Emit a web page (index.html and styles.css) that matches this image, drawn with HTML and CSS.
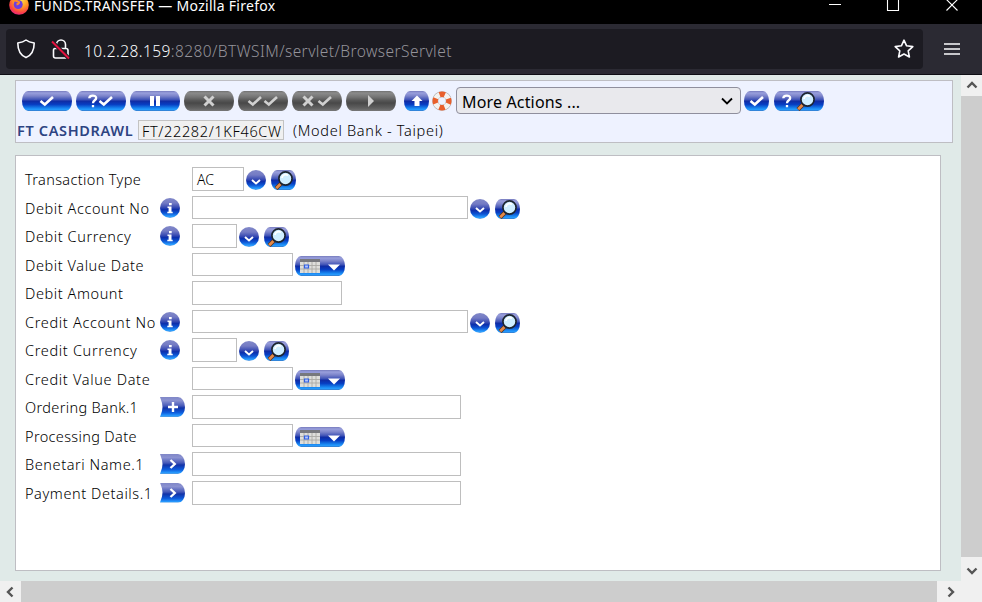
FILE: index.html
```html
<!DOCTYPE html>
<html lang="en">
<head>
<meta charset="utf-8">
<title>FUNDS.TRANSFER</title>
<link rel="stylesheet" href="styles.css">
</head>
<body>
<svg class="defs" aria-hidden="true">
  <defs>
    <radialGradient id="fox" cx=".6" cy=".25" r=".8"><stop offset="0" stop-color="#ffe04a"/><stop offset=".45" stop-color="#ff9a22"/><stop offset=".8" stop-color="#fa4048"/><stop offset="1" stop-color="#e5208a"/></radialGradient>
    <symbol id="check" viewBox="0 0 16 12"><path d="M1.5 6 5.8 9.5 14 2" fill="none" stroke="currentColor" stroke-width="2.6"/></symbol>
    <symbol id="cross" viewBox="0 0 12 12"><path d="M1.5 1.5 10.5 10.5M10.5 1.5 1.5 10.5" fill="none" stroke="currentColor" stroke-width="3"/></symbol>
    <symbol id="question" viewBox="0 0 10 14"><path d="M1.3 4.2C1.3.8 8.2.6 8.2 4 8.2 6.4 5 6.2 5 9.3M5 11v2.2" fill="none" stroke="currentColor" stroke-width="2.3"/></symbol>
    <symbol id="pause" viewBox="0 0 12 12"><path d="M1 1h4v10H1zM7 1h4v10H7z" fill="currentColor"/></symbol>
    <symbol id="play" viewBox="0 0 8 12"><path d="M1 0 7 6 1 12z" fill="currentColor"/></symbol>
    <symbol id="up" viewBox="0 0 12 12"><path d="M6 .5 11.5 6H8.5v5h-5V6H.5z" fill="currentColor"/></symbol>
    <symbol id="down" viewBox="0 0 12 8"><path d="M2 2 6 5.5 10 2" fill="none" stroke="currentColor" stroke-width="2"/></symbol>
    <symbol id="plus" viewBox="0 0 12 12"><path d="M6 1v10M1 6h10" fill="none" stroke="currentColor" stroke-width="2.4"/></symbol>
    <symbol id="next" viewBox="0 0 8 12"><path d="M1.5 2 5.8 6 1.5 10" fill="none" stroke="currentColor" stroke-width="2.3"/></symbol>
    <symbol id="info" viewBox="0 0 8 12"><path d="M3 1h2.7v2.3H3zM1.5 4.6h4v5.2h1.2v1.4h-5.4V9.8h1.3V6H1.5z" fill="currentColor"/></symbol>
    <symbol id="lens" viewBox="0 0 20 20"><path d="M2 18.5 7 13.5" stroke="#56301c" stroke-width="4.2"/><path d="M2.2 18.3 6.5 14" stroke="#e38a4a" stroke-width="2.7"/><circle cx="11.5" cy="8.5" r="6.6" fill="#cfeeff" stroke="#1c2530" stroke-width="1.7"/><path d="M8 8C8.3 5 11 3.8 14 5.3" fill="none" stroke="#fff" stroke-width="1.8"/></symbol>
    <symbol id="calendar" viewBox="0 0 20 14"><path d="M0 0h20v14H0z" fill="#dededb"/><path d="M0 0h20v3H0z" fill="#77787d"/><path d="M0 6.5h20M0 10h20M4 3v11M8 3v11M12 3v11M16 3v11" stroke="#aaa9a5" stroke-width=".9"/><path d="M4.5 6h4v3h-4z" fill="#b7c9ff" stroke="#315fe0" stroke-width="1.2"/></symbol>
    <symbol id="triangle" viewBox="0 0 12 7"><path d="M0 .5h12L6 6.5z" fill="currentColor"/></symbol>
    <symbol id="scroll" viewBox="0 0 12 8"><path d="M1.500 6.500 6 2 10.500 6.500" fill="none" stroke="#555" stroke-width="2.4"/></symbol>
  </defs>
</svg>

<header class="titlebar">
  <svg class="firefox" viewBox="0 0 20 20"><circle cx="10" cy="10" r="9.8" fill="url(#fox)"/><circle cx="9.2" cy="9.5" r="4.5" fill="#6c3ee0"/><path d="M3 5C6 5 7 6 9 6.5 11 7 10 9 7.5 9.5" fill="none" stroke="#ff8a28" stroke-width="2"/></svg>
  <span class="title">FUNDS.TRANSFER — Mozilla Firefox</span>
  <svg class="window-controls" viewBox="0 0 130 24"><path d="M1 4.5h12M59.500-.5h11v11h-11zM118.500-.5l11 11M129.500-.5l-11 11" fill="none" stroke="#fff" stroke-width="1.1"/></svg>
</header>
<nav class="toolbar">
  <div class="urlbar">
    <svg class="shield" viewBox="0 0 20 20"><path d="M10 1C7.500 3 5 3.500 1.800 4c0 7 2 12 8.200 14.600C16.200 16 18.200 11 18.200 4 15 3.500 12.500 3 10 1z" fill="none" stroke="#fbfbfe" stroke-width="1.6" stroke-linejoin="round"/></svg>
    <svg class="lock" viewBox="0 0 20 22"><path d="M5.500 9V6.500a4.500 4.500 0 0 1 9 0V11M4 10.500h11c1.500 0 2 .5 2 2V18c0 1.500-.5 2-2 2H4.500c-1.500 0-2-.5-2-2v-5.500c0-1 .5-2 1.500-2z" fill="none" stroke="#fbfbfe" stroke-width="1.6"/><path d="M1 3.500 18 20.500" stroke="#1c1b22" stroke-width="4"/><path d="M1 3.500 18 20.500" stroke="#e5123f" stroke-width="1.9"/></svg>
    <span class="url"><b>10.2.28.159</b>:8280/BTWSIM/servlet/BrowserServlet</span>
    <svg class="star" viewBox="0 0 20 20"><path d="M10 1.200 12.600 6.800 18.800 7.600 14.200 11.800 15.400 18 10 15 4.600 18 5.800 11.800 1.200 7.600 7.400 6.800z" fill="none" stroke="#fbfbfe" stroke-width="1.6" stroke-linejoin="round"/></svg>
  </div>
  <svg class="menu" viewBox="0 0 16 14"><path d="M0 2h16M0 7h16M0 12h16" stroke="#fbfbfe" stroke-width="1.5"/></svg>
</nav>

<div class="viewport">
  <main class="page">
    <section class="panel actions">
      <div class="action-row">
        <span class="pill"><svg class="i16"><use href="#check"/></svg></span>
        <span class="pill"><svg class="iq"><use href="#question"/></svg><svg class="i16"><use href="#check"/></svg></span>
        <span class="pill"><svg class="i12"><use href="#pause"/></svg></span>
        <span class="pill off"><svg class="i12"><use href="#cross"/></svg></span>
        <span class="pill off"><svg class="i16"><use href="#check"/></svg><svg class="i16"><use href="#check"/></svg></span>
        <span class="pill off spaced"><svg class="i12"><use href="#cross"/></svg><svg class="i16"><use href="#check"/></svg></span>
        <span class="pill off"><svg class="i8"><use href="#play"/></svg></span>
        <span class="pill small first"><svg class="i12"><use href="#up"/></svg></span>
        <svg class="buoy" viewBox="0 0 20 20"><circle cx="10" cy="10" r="6.800" fill="none" stroke="#aaa9a9" stroke-width="6"/><circle cx="10" cy="10" r="6.800" fill="none" stroke="#f4f2ef" stroke-width="5"/><circle cx="10" cy="10" r="6.800" fill="none" stroke="#e85f2c" stroke-width="5.400" stroke-dasharray="5.340 5.340" stroke-dashoffset="2.670"/></svg>
        <div class="select"><span>More Actions ...</span><svg viewBox="0 0 12 8"><path d="M1 1.500 6 6.500 11 1.500" fill="none" stroke="#000" stroke-width="1.8"/></svg></div>
        <span class="pill small"><svg class="i16"><use href="#check"/></svg></span>
        <span class="pill search"><svg class="iq"><use href="#question"/></svg><svg class="i20"><use href="#lens"/></svg></span>
      </div>
      <div class="record"><strong>FT CASHDRAWL</strong><span class="record-id">FT/22282/1KF46CW</span><span class="company">(Model Bank - Taipei)</span></div>
    </section>

    <section class="panel form">
      <div class="row"><label class="even">Transaction Type</label><span class="lead"></span><span class="field w52">AC</span><span class="drop"><svg><use href="#down"/></svg></span><span class="pill small find"><svg class="i20"><use href="#lens"/></svg></span></div>
      <div class="row"><label>Debit Account No</label><span class="lead"><span class="info"><svg><use href="#info"/></svg></span></span><span class="field w276"></span><span class="drop"><svg><use href="#down"/></svg></span><span class="pill small find"><svg class="i20"><use href="#lens"/></svg></span></div>
      <div class="row"><label>Debit Currency</label><span class="lead"><span class="info"><svg><use href="#info"/></svg></span></span><span class="field w45"></span><span class="drop"><svg><use href="#down"/></svg></span><span class="pill small find"><svg class="i20"><use href="#lens"/></svg></span></div>
      <div class="row"><label>Debit Value Date</label><span class="lead"></span><span class="field w101"></span><span class="pill date"><svg class="cal"><use href="#calendar"/></svg><svg class="tri"><use href="#triangle"/></svg></span></div>
      <div class="row"><label>Debit Amount</label><span class="lead"></span><span class="field w150"></span></div>
      <div class="row"><label class="wide">Credit Account No</label><span class="lead"><span class="info"><svg><use href="#info"/></svg></span></span><span class="field w276"></span><span class="drop"><svg><use href="#down"/></svg></span><span class="pill small find"><svg class="i20"><use href="#lens"/></svg></span></div>
      <div class="row"><label class="wide">Credit Currency</label><span class="lead"><span class="info"><svg><use href="#info"/></svg></span></span><span class="field w45"></span><span class="drop"><svg><use href="#down"/></svg></span><span class="pill small find"><svg class="i20"><use href="#lens"/></svg></span></div>
      <div class="row"><label class="wide">Credit Value Date</label><span class="lead"></span><span class="field w101"></span><span class="pill date"><svg class="cal"><use href="#calendar"/></svg><svg class="tri"><use href="#triangle"/></svg></span></div>
      <div class="row"><label class="even">Ordering Bank.1</label><span class="lead"><span class="tab"><svg class="i12"><use href="#plus"/></svg></span></span><span class="field w269"></span></div>
      <div class="row"><label class="even">Processing Date</label><span class="lead"></span><span class="field w101"></span><span class="pill date"><svg class="cal"><use href="#calendar"/></svg><svg class="tri"><use href="#triangle"/></svg></span></div>
      <div class="row"><label>Benetari Name.1</label><span class="lead"><span class="tab"><svg class="i8"><use href="#next"/></svg></span></span><span class="field w269"></span></div>
      <div class="row"><label>Payment Details.1</label><span class="lead"><span class="tab"><svg class="i8"><use href="#next"/></svg></span></span><span class="field w269"></span></div>
    </section>
  </main>
  <div class="vscroll"><svg><use href="#scroll"/></svg><div class="thumb"></div><svg class="turn-down"><use href="#scroll"/></svg></div>
  <div class="hscroll"><svg class="turn-left"><use href="#scroll"/></svg><div class="thumb"></div><svg class="turn-right"><use href="#scroll"/></svg></div>
  <div class="corner"></div>
</div>
</body>
</html>
```
FILE: styles.css
```css
* { box-sizing: border-box; }
body { margin: 0; width: 982px; height: 602px; overflow: hidden; display: flex; flex-direction: column; font: 300 14.5px/20px "Noto Sans", sans-serif; color: #000; }
svg { display: block; flex: none; }
.defs { position: absolute; width: 0; height: 0; }
.titlebar { height: 24px; background: #000; color: #fff; display: flex; }
.firefox { width: 20px; height: 20px; margin: -5px 5px 0 9px; }
.title { font-size: 14px; line-height: 20px; margin-top: -4px; white-space: nowrap; letter-spacing: .29px; font-weight: 400; }
.window-controls { width: 130px; height: 24px; margin: 0 24px 0 auto; }
.toolbar { height: 51px; padding: 5px 0 6px 6px; background: #2b2a33; border-bottom: 1px solid #0f0e15; display: flex; align-items: flex-start; }
.urlbar { width: 917px; height: 40px; border-radius: 4px; background: #1c1b22; color: #94939a; display: flex; align-items: center; padding: 0 9px 0 10px; }
.shield { width: 20px; height: 20px; }
.lock { width: 20px; height: 22px; margin-left: 15px; }
.url { font-size: 15.5px; margin: 4px 0 0 13px; white-space: nowrap; letter-spacing: .42px; }
.url b { color: #fbfbfe; font-weight: 300; }
.star { width: 20px; height: 20px; margin-left: auto; }
.menu { width: 16px; height: 14px; margin: 13px 0 0 21px; }

.viewport { height: 527px; display: grid; grid-template: 506px 21px / 961px 21px; }
.page { background: #e0eae8; padding: 5px 8px 10px 15px; }
.panel { border: 1px solid #bebec3; }
.actions { width: 938px; height: 63px; background: #eef2ff; padding: 6px 0 0 6px; }
.action-row { display: flex; align-items: center; height: 27px; gap: 4px; }
.pill { width: 50px; height: 20px; margin-top: 1px; border-radius: 6px / 10px; color: #fff; display: flex; align-items: center; justify-content: center; background: linear-gradient(#767bbd 0, #999fdc 10%, #7c84ca 25%, #3d51b6 44%, #102ca4 51%, #073dc2 67%, #157be9 83%, #249bff 92%, #377ac8 100%); flex: none; }
.off { background: linear-gradient(#707070, #8b8b8b 10%, #747474 30%, #565656 48%, #484848 60%, #606060 85%, #777 100%); color: #d0d0d0; }
.spaced { gap: 3px; }
.small { width: 25px; }
.first { margin-left: 4px; }
.i16 { width: 16px; height: 12px; }
.i12 { width: 12px; height: 12px; }
.i8 { width: 8px; height: 12px; }
.iq { width: 10px; height: 14px; }
.i20 { width: 20px; height: 20px; }
.search { gap: 4px; margin-left: 1px; }
.buoy { width: 20px; height: 20px; margin: 1px 0 0 -1px; }
.select { width: 285px; height: 27px; border: 1px solid #8f8f9d; border-radius: 4px; background: #e9e9ed; padding: 2px 7px 0 5px; display: flex; justify-content: space-between; font-size: 16px; font-weight: 400; line-height: 24px; }
.select span { letter-spacing: .16px; }
.select svg { width: 12px; height: 8px; margin-top: 7px; }
.buoy + .select { margin-right: -1px; }
.record { display: flex; margin: 6px 0 0 -5px; height: 20px; white-space: nowrap; }
.record strong { color: #2d4482; font-size: 14.5px; font-weight: 600; width: 121px; line-height: 20px; letter-spacing: .65px; }
.record-id { width: 146px; height: 20px; background: #f0f0f0; border: 1px solid #c3c3c3; padding-left: 3px; letter-spacing: .65px; }
.company { margin-left: 9px; letter-spacing: .7px; }

.form { width: 926px; height: 416px; background: #fff; margin-top: 12px; padding: 11px 0 0 9px; }
.row { height: 28.5px; display: flex; align-items: flex-start; }
.row label { width: 135px; line-height: 24px; white-space: nowrap; letter-spacing: .58px; }
.row .even { letter-spacing: .35px; }
.row .wide { letter-spacing: .67px; }
.lead { width: 32px; padding-top: 2px; }
.field { height: 23px; border: 1px solid #bebebe; background: #fff; font-size: 14px; line-height: 23px; padding-left: 4px; flex: none; }
.w45 { width: 45px; height: 24px; }
.w52 { width: 52px; height: 24px; }
.w101 { width: 101px; }
.w150 { width: 150px; height: 24px; }
.w269 { width: 269px; height: 24px; }
.w276 { width: 276px; }
.info, .drop { width: 20px; height: 20px; border-radius: 50%; color: #fff; display: flex; align-items: center; justify-content: center; background: linear-gradient(#8188c8, #747bc4 25%, #3548b2 48%, #0c2fac 58%, #0d55d4 75%, #279cff 92%, #70a4df); }
.info svg { width: 8px; height: 12px; }
.drop { margin: 3px 0 0 2px; }
.drop svg { width: 12px; height: 8px; margin-top: 3px; }
.find { margin: 3px 0 0 5px; }
.date { margin: 3px 0 0 2px; gap: 8px; }
.cal { width: 20px; height: 14px; }
.tri { width: 12px; height: 7px; margin-top: 4px; }
.tab { width: 25px; height: 20px; color: #fff; display: flex; align-items: center; justify-content: center; border-radius: 0 7px 7px 0 / 0 10px 10px 0; background: linear-gradient(#8087c7, #8b92d1 18%, #4558b8 45%, #1233a8 55%, #0d5ddd 78%, #289cff 94%, #5d9ad9); clip-path: polygon(0 0, 100% 0, 100% 100%, 0 100%, 8% 70%, 10% 50%, 8% 30%); }

.vscroll { background: #f0f0f0; display: flex; flex-direction: column; align-items: center; padding: 6px 0; }
.vscroll svg, .hscroll svg { width: 12px; height: 8px; }
.vscroll .thumb { width: 21px; height: 461px; margin: 7px 0 10px; background: #cdcdcd; }
.hscroll { background: #f0f0f0; display: flex; align-items: center; }
.hscroll svg { margin: 0 5px 0 4px; }
.hscroll .thumb { width: 916px; height: 21px; background: #cdcdcd; }
.hscroll .turn-right { margin: 0 0 0 8px; }
.turn-down { transform: rotate(180deg); }
.turn-left { transform: rotate(-90deg); }
.turn-right { transform: rotate(90deg); }
.corner { background: #f0f0f0; }
```
